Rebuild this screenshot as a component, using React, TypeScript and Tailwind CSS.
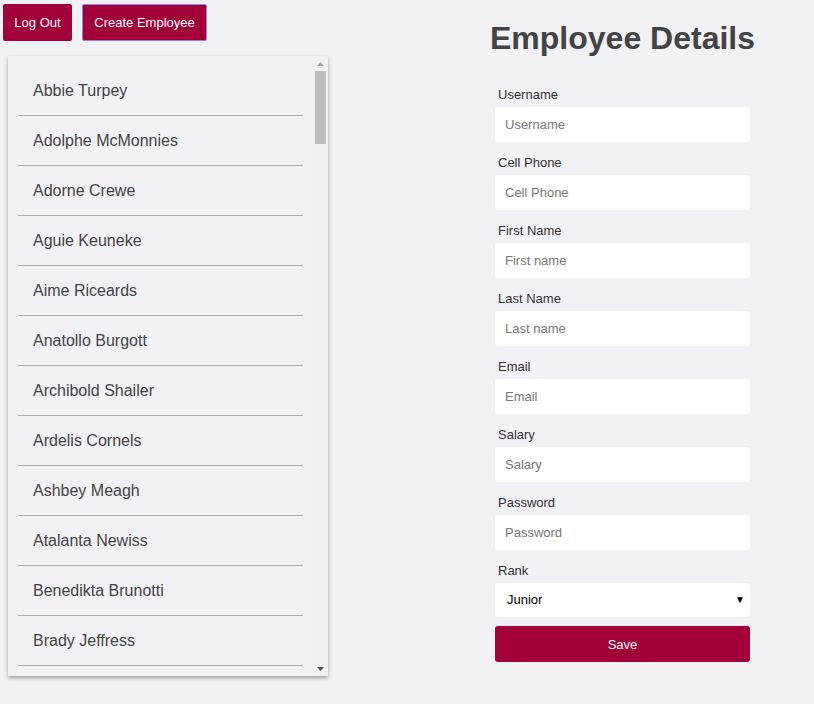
import { useState } from 'react';

const employees = [
    "Abbie Turpey", "Adolphe McMonnies", "Adorne Crewe", "Aguie Keuneke", "Aime Riceards",
    "Anatollo Burgott", "Archibold Shailer", "Ardelis Cornels", "Ashbey Meagh", "Atalanta Newiss",
    "Benedikta Brunotti", "Brady Jeffress", "Brana Sheers", "Brenn Gladdor", "Bria Lockey",
    "Caitrin Wortley", "Calla Dwyer", "Cam Haddeston", "Carlin Muckeen", "Cecilia Parram",
    "Chad Bowering", "Cherish Gostling", "Clea Bowart", "Codi Habbershon", "Consuela Vasyushkhin",
    "Corny Twelves", "Dall Gimblet", "Darcey Pieroni", "Delmor Loughnan", "Devy Kerrich",
    "Dinnie Scarff", "Dorise Lempke", "Eadie Spilisy", "Edi Fullbrook", "Elberta Cottam",
    "Elli Budcock", "Emmery Bowley", "Erinna Havill", "Ethelind Rainville", "Fanchon Gomm",
    "Fayina Ruddiman", "Fidel Steagall", "Flossy Adamek", "Gale Yakubovich", "Garold Milch",
    "Gerri Lamden", "Giffer Tabbernor", "Glennis Pendrich", "Gusta Pellman", "Halette Kebell",
    "Harriot Fawlo", "Hersch Dowears", "Hilliard Brecken", "Iolanthe Gethen", "Isahella Jeal",
    "Ivett Drache", "Jacquelin Tuckie", "Jeana Tuffield", "Jilli Mattacks", "Jobi Wasielewski",
    "Kaela Poulsum", "Karoly Laird", "Kerby Duckers", "Kial Tatlock", "Lanette Moncaster",
    "Leeland Vasilov", "Lexy Gowanson", "Lorrin Ferrant", "Lucila Peres", "Maddi Scrivens",
    "Marlow Eastbury", "Merrill Haselwood", "Mindy Kestle", "Mortie Clutram", "Nadia Yakunchikov",
    "Nelle Ledgister", "Niki Spellacy", "Noak Gaitskell", "Odilia Skully", "Orsola Brouwer",
    "Pall Bruckman", "Pepe Rickasse", "Quinn Ashingden", "Raddie Bazire", "Renell Chaters",
    "Rosco Bleythin", "Sallyann Tortis", "Sherwynd Maybury", "Sibylle Hurche", "Tabbi Rounsefull",
    "Teodor Blewis", "Trula Sandcroft", "Ulberto Kinson", "Vanya Glaysher", "Verine Sweetman",
    "Wallis Menichi", "Wynn Hiddsley", "Xenos Derrell", "Yasmeen Tillot", "Zeke Cobbled"
];

const fields = [
    { label: "Username", placeholder: "Username", type: "text" },
    { label: "Cell Phone", placeholder: "Cell Phone", type: "text" },
    { label: "First Name", placeholder: "First name", type: "text" },
    { label: "Last Name", placeholder: "Last name", type: "text" },
    { label: "Email", placeholder: "Email", type: "email" },
    { label: "Salary", placeholder: "Salary", type: "text" },
    { label: "Password", placeholder: "Password", type: "password" },
];

export default function App() {
    const [rank, setRank] = useState("Junior");

    return (
        <div className="min-h-[704px] w-full bg-[#f2f1f6] font-['Liberation_Sans',Arial,sans-serif] flex">
            {/* left column: actions + employee list */}
            <div className="w-[431px] shrink-0">
                <div className="flex items-center gap-[10px] pl-[3px] pt-[4px]">
                    <button className="w-[69px] h-[37px] bg-[#a20039] text-white text-[13px] rounded-[2px]">
                        Log Out
                    </button>
                    <button className="w-[125px] h-[37px] bg-[#a20039] text-white text-[13px] rounded-[2px] border border-[#8a86f0]">
                        Create Employee
                    </button>
                </div>

                <div className="ml-[8px] mt-[15px] w-[320px] h-[620px] flex bg-[#f2f1f6] shadow-[0_2px_4px_rgba(0,0,0,0.35)]">
                    <div className="flex-1 overflow-y-scroll [scrollbar-width:none] pt-[10px]">
                        <ul>
                            {employees.map((name) => (
                                <li
                                    key={name}
                                    className="mx-[10px] h-[50px] flex items-center pl-[15px] border-b border-[#b3abae] text-[16px] text-[#444444] cursor-pointer"
                                >
                                    {name}
                                </li>
                            ))}
                        </ul>
                    </div>

                    {/* scrollbar */}
                    <div className="w-[15px] shrink-0 bg-[#f1f1f1] flex flex-col">
                        <div className="h-[15px] flex items-center justify-center">
                            <svg width="7" height="4" viewBox="0 0 7 4"><path d="M3.5 0 L7 4 L0 4 Z" fill="#a3a3a3" /></svg>
                        </div>
                        <div className="flex-1 px-[2px]">
                            <div className="h-[73px] bg-[#bdbdbd]" />
                        </div>
                        <div className="h-[15px] flex items-center justify-center">
                            <svg width="7" height="4" viewBox="0 0 7 4"><path d="M0 0 L7 0 L3.5 4 Z" fill="#505050" /></svg>
                        </div>
                    </div>
                </div>
            </div>

            {/* right column: details form */}
            <div className="flex-1 flex flex-col items-center">
                <h1 className="mt-[20px] text-[32px] leading-[37px] font-bold text-[#434343]">
                    Employee Details
                </h1>

                <form className="w-[255px] mt-[30px] flex flex-col" onSubmit={(e) => e.preventDefault()}>
                    {fields.map((f) => (
                        <div key={f.label} className="flex flex-col mb-[13px]">
                            <label className="pl-[3px] text-[13px] leading-[15px] text-[#333333] mb-[5px]">{f.label}</label>
                            <input
                                type={f.type}
                                placeholder={f.placeholder}
                                className="h-[35px] bg-white rounded-[3px] pl-[10px] text-[13px] text-[#333333] placeholder:text-[#777777] outline-none"
                            />
                        </div>
                    ))}

                    <div className="flex flex-col mb-[9px]">
                        <label className="pl-[3px] text-[13px] leading-[15px] text-[#333333] mb-[5px]">Rank</label>
                        <div className="relative">
                            <select
                                value={rank}
                                onChange={(e) => setRank(e.target.value)}
                                className="appearance-none w-full h-[34px] bg-white rounded-[3px] pl-[12px] text-[13px] text-black outline-none"
                            >
                                <option>Junior</option>
                                <option>Senior</option>
                                <option>Manager</option>
                            </select>
                            <span className="absolute right-[5px] top-[9px] text-[10px] text-black pointer-events-none">▼</span>
                        </div>
                    </div>

                    <button type="submit" className="h-[36px] pt-[1px] bg-[#a20039] text-white text-[13px] rounded-[3px]">
                        Save
                    </button>
                </form>
            </div>
        </div>
    );
}
